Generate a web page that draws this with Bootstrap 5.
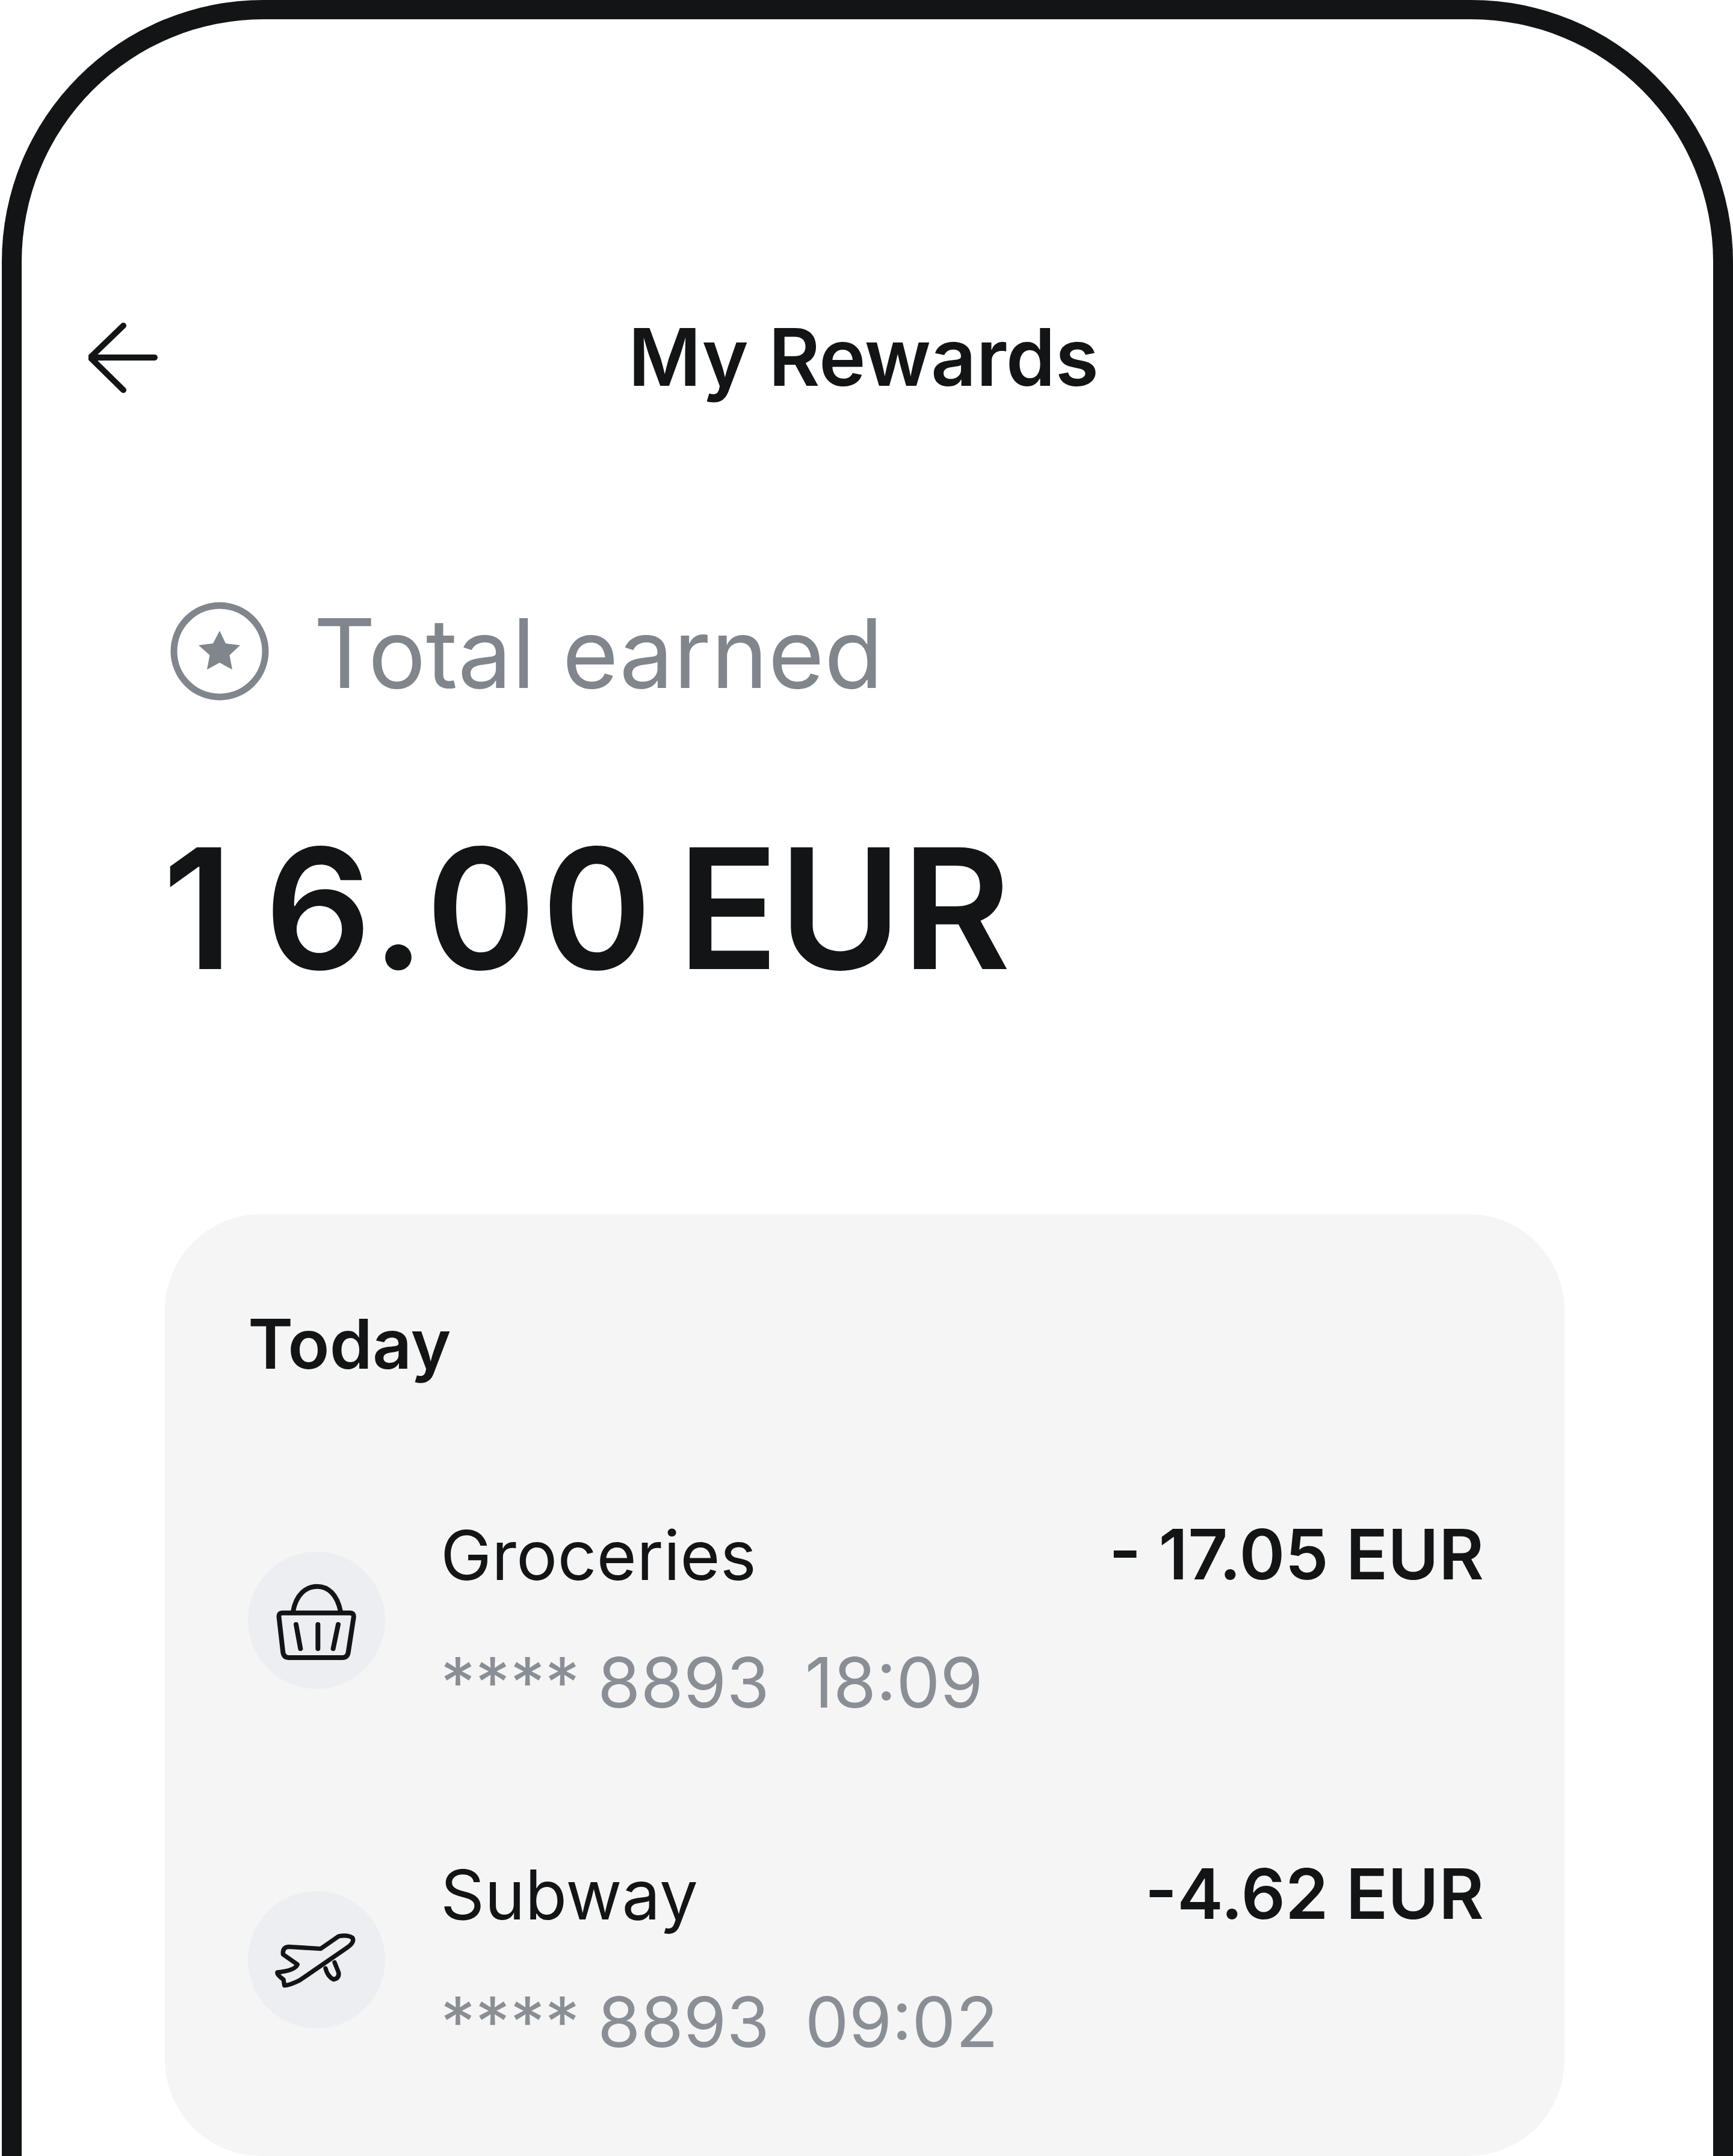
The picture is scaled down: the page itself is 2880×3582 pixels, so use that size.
<!DOCTYPE html>
<html lang="en">
<head>
<meta charset="utf-8">
<title>My Rewards</title>
<link href="https://cdn.jsdelivr.net/npm/bootstrap@5.3.0/dist/css/bootstrap.min.css" rel="stylesheet">
<style>
html,body{margin:0;background:#fff;}
body{font-family:Inter,"Liberation Sans",sans-serif;color:#131416;width:2880px;height:3582px;overflow:hidden;}
.phone-frame{height:3582px;margin-left:3px;border:33px solid #131416;border-top-width:32px;border-bottom:0;border-radius:435px 435px 0 0;overflow:hidden;background:#fff;}
.app-head{padding:502px 0 0 111px;height:622px;}
.app-head svg{width:120px;height:120px;display:block;flex:none;}
.app-title{font-size:131.500px;line-height:120px;font-weight:600;margin-left:777px;}
.reward-body{padding:346px 247px 0 238px;}
.earned-row{height:164px;padding-left:9px;gap:74px;color:#81858c;}
.earned-row svg{width:164px;height:164px;flex:none;display:block;}
.earned-label{font-size:160px;line-height:164px;padding-top:5px;}
.earned-sum{font-size:278px;line-height:300px;font-weight:600;margin:0 0 0 -4px;padding-top:195px;height:495px;word-spacing:-.1em;}
.sum-one{letter-spacing:52px;}
.sum-rest{letter-spacing:9px;}
.tx-panel{margin-top:358px;height:1565px;background:#f5f5f5;border-radius:160px;padding:151px 134px 0 138px;}
.tx-date{font-size:114px;line-height:130px;font-weight:600;margin-bottom:209px;}
.tx-row{height:363px;margin-bottom:201px;}
.tx-ico{width:228px;height:228px;background:#eceef1;flex:none;margin-right:92px;margin-top:6px;}
.tx-ico svg{width:228px;height:228px;display:block;}
.tx-line{font-size:114px;line-height:150px;padding-top:2px;}
.tx-sub{color:#8a8e95;margin-top:61px;white-space:pre;font-size:115.500px;word-spacing:-3px;}
.tx-sum{font-size:115px;line-height:150px;font-weight:600;white-space:nowrap;padding-top:1px;}
</style>
</head>
<body>
<div class="phone-frame">
  <div class="app-head d-flex align-items-start">
    <svg viewBox="0 0 120 120" fill="none" stroke="#131416" stroke-width="10" stroke-linecap="round" stroke-linejoin="round"><path d="M3 60H110M58 7L3 60L58 114"/></svg>
    <div class="app-title">My Rewards</div>
  </div>
  <div class="reward-body">
    <div class="earned-row d-flex align-items-center">
      <svg viewBox="0 0 164 164"><circle cx="82" cy="82" r="76" fill="none" stroke="#81858c" stroke-width="11"/><path fill="#81858c" d="M82 48l10 21 24 3-17.500 16.500 4.500 24-21-11.500-21 11.500 4.500-24L47 72l24-3z"/></svg>
      <div class="earned-label">Total earned</div>
    </div>
    <div class="earned-sum"><span class="sum-one">1</span><span class="sum-rest">6.0</span>0 EUR</div>
    <div class="tx-panel">
      <div class="tx-date">Today</div>
      <div class="tx-row d-flex align-items-center">
        <div class="tx-ico rounded-circle">
          <svg viewBox="100 107 684 684" fill="none" stroke="#131416" stroke-width="24" stroke-linecap="round" stroke-linejoin="round"><path d="M325 405C340 320 390 280 445 280C500 280 545 320 562 405"/><path d="M272 412H608Q630 412 627 435L600 610Q596 635 570 635H305Q280 635 275 610L255 435Q252 412 272 412Z"/><path d="M340 470L362 590M449 470V590M550 470L525 590"/></svg>
        </div>
        <div class="flex-grow-1 tx-line">
          <div>Groceries</div>
          <div class="tx-sub">**** 8893  18:09</div>
        </div>
        <div class="tx-sum align-self-start">- 17.05 EUR</div>
      </div>
      <div class="tx-row d-flex align-items-center">
        <div class="tx-ico rounded-circle">
          <svg viewBox="93 125 684 684" fill="none" stroke="#131416" stroke-width="22" stroke-linecap="round" stroke-linejoin="round"><path d="M455 412L295 402Q265 405 268 440L340 490Q330 520 240 530Q235 540 270 565L275 595Q300 595 350 570L590 405Q625 380 615 358Q590 340 545 350Z"/><path d="M480 510Q490 550 520 565Q550 560 545 530L525 480"/></svg>
        </div>
        <div class="flex-grow-1 tx-line">
          <div>Subway</div>
          <div class="tx-sub">**** 8893  09:02</div>
        </div>
        <div class="tx-sum align-self-start">-4.62 EUR</div>
      </div>
    </div>
  </div>
</div>
</body>
</html>
